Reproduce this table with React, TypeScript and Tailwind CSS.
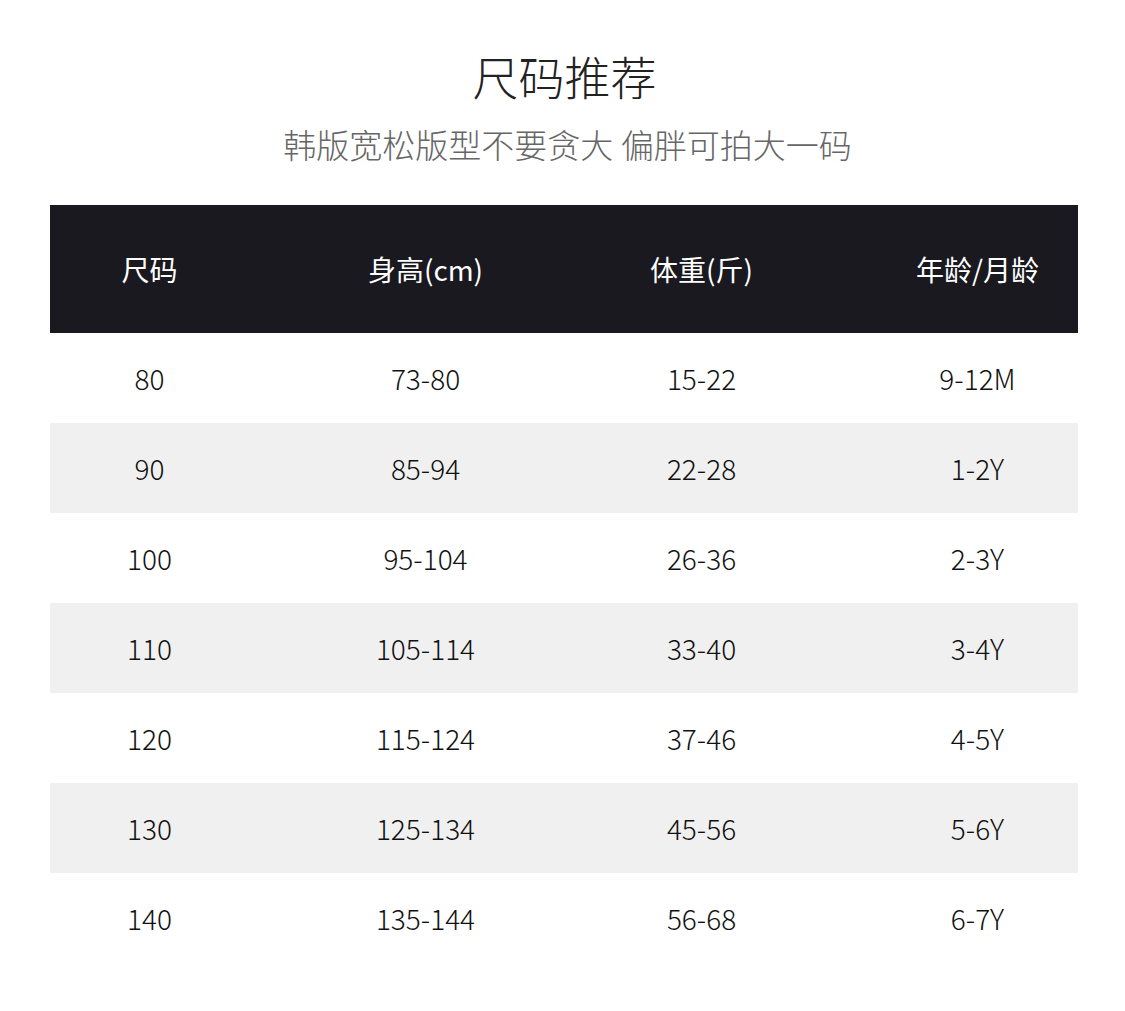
const headers = ["尺码", "身高(cm)", "体重(斤)", "年龄/月龄"];

const rows = [
  ["80", "73-80", "15-22", "9-12M"],
  ["90", "85-94", "22-28", "1-2Y"],
  ["100", "95-104", "26-36", "2-3Y"],
  ["110", "105-114", "33-40", "3-4Y"],
  ["120", "115-124", "37-46", "4-5Y"],
  ["130", "125-134", "45-56", "5-6Y"],
  ["140", "135-144", "56-68", "6-7Y"],
];

function Row({ cells, className }: { cells: string[]; className: string }) {
  return (
    <div className={`grid grid-cols-[200px_200px_200px_200px] gap-x-[76px] items-center ${className}`}>
      {cells.map((c, i) => (
        <div key={i} className="text-center text-[28px] leading-none">
          {c}
        </div>
      ))}
    </div>
  );
}

export default function App() {
  return (
    <div
      className="w-[1125px] h-[1011px] bg-white flex flex-col items-center font-light"
      style={{ fontFamily: '"Noto Sans CJK SC", "Noto Sans", sans-serif' }}
    >
      <h1 className="mt-[52px] ml-[4px] text-[46px] leading-[46px] text-[#222]">尺码推荐</h1>
      <p className="mt-[30px] ml-[10px] text-[33px] leading-[32px] text-[#666]">韩版宽松版型不要贪大 偏胖可拍大一码</p>

      <div className="mt-[45px] ml-[2px] w-[1028px]">
        <Row cells={headers} className="h-[128px] bg-[#19191f] text-white font-normal" />
        {rows.map((r, i) => (
          <Row
            key={r[0]}
            cells={r}
            className={`h-[90px] text-[#111] ${i % 2 === 1 ? "bg-[#f0f0f0]" : "bg-white"}`}
          />
        ))}
      </div>
    </div>
  );
}
